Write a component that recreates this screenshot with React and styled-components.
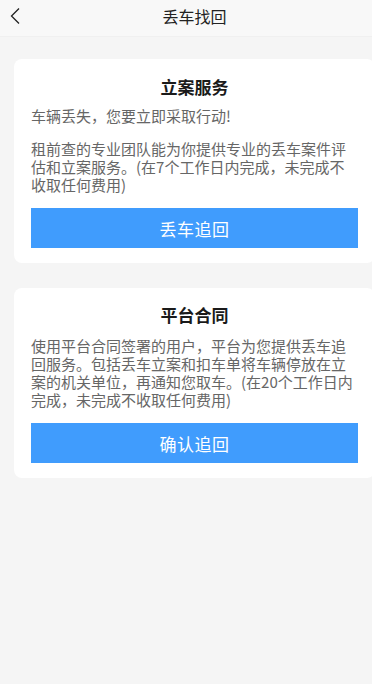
import React from "react";
import styled, { createGlobalStyle } from "styled-components";

const Global = createGlobalStyle`
  html, body { margin: 0; padding: 0; background: #f5f5f5; overflow-x: hidden; }
  body { font-family: "Noto Sans CJK SC", "Noto Sans", sans-serif; }
`;

const Page = styled.div`
  width: 389px;
  min-height: 684px;
  background: #f5f5f5;
`;

const Header = styled.header`
  position: relative;
  height: 37px;
  background: #f8f8f8;
  display: flex;
  align-items: center;
  justify-content: center;
  border-bottom: 1px solid #f0f0f0;
  box-sizing: border-box;
`;

const Back = styled.button`
  position: absolute;
  left: 6px;
  top: 4px;
  width: 18px;
  height: 24px;
  padding: 0;
  border: 0;
  background: none;
  display: flex;
  align-items: center;
  justify-content: center;
`;

const HeaderTitle = styled.h1`
  margin: 0;
  font-size: 16px;
  font-weight: 400;
  color: #222;
  line-height: 22px;
  margin-top: -4px;
`;

const Content = styled.main`
  display: flex;
  flex-direction: column;
  gap: 25px;
  padding: 22px 14px 0;
`;

const Card = styled.section`
  background: #fff;
  border-radius: 8px;
  padding: ${(p) => p.$top}px 17px 15px;
  display: flex;
  flex-direction: column;
`;

const Title = styled.h2`
  margin: 0;
  text-align: center;
  font-size: 17px;
  line-height: 24px;
  font-weight: 700;
  color: #1a1a1a;
`;

const Text = styled.p`
  margin: ${(p) => p.$mt}px 0 0;
  font-size: 15px;
  line-height: 18px;
  color: #666;
`;

const Button = styled.button`
  margin-top: 14px;
  height: 40px;
  border: 0;
  border-radius: 0;
  background: #409cfd;
  color: #fff;
  font-family: inherit;
  font-size: 17px;
  letter-spacing: 0.5px;
  cursor: pointer;
`;

export default function App() {
  return (
    <Page>
      <Global />
      <Header>
        <Back aria-label="back">
          <svg width="12" height="18" viewBox="0 0 12 18" fill="none">
            <path d="M10 1.5L2.5 9l7.5 7.5" stroke="#222" strokeWidth="1.3" />
          </svg>
        </Back>
        <HeaderTitle>丢车找回</HeaderTitle>
      </Header>
      <Content>
        <Card $top={16}>
          <Title>立案服务</Title>
          <Text $mt={8}>车辆丢失，您要立即采取行动!</Text>
          <Text $mt={15}>
            租前查的专业团队能为你提供专业的丢车案件评估和立案服务。(在7个工作日内完成，未完成不收取任何费用)
          </Text>
          <Button>丢车追回</Button>
        </Card>
        <Card $top={15}>
          <Title>平台合同</Title>
          <Text $mt={10}>
            使用平台合同签署的用户，平台为您提供丢车追回服务。包括丢车立案和扣车单将车辆停放在立案的机关单位，再通知您取车。(在20个工作日内完成，未完成不收取任何费用)
          </Text>
          <Button>确认追回</Button>
        </Card>
      </Content>
    </Page>
  );
}
